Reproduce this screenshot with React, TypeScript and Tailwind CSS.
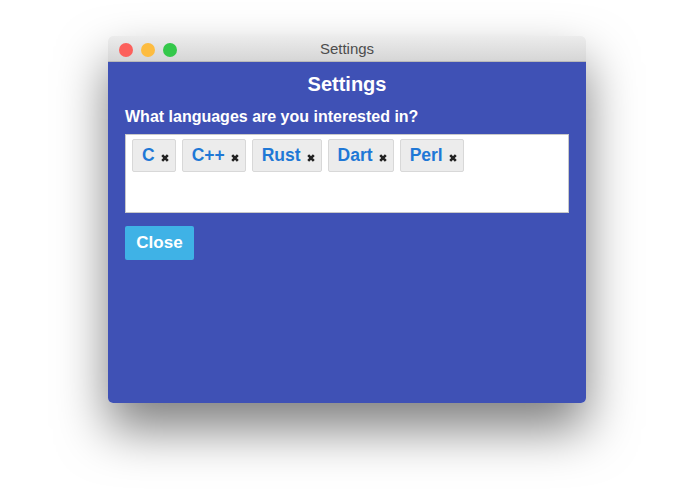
const languages = ['C', 'C++', 'Rust', 'Dart', 'Perl'];

function Chip({ label }: { label: string }) {
  return (
    <span className="flex h-[33px] items-center gap-[6px] rounded-[2px] border border-[#d8d8d8] bg-[#ececec] pl-[9px] pr-[6px]">
      <span className="text-[17.5px] font-bold leading-none text-[#1f78d6]">{label}</span>
      <svg width="8" height="8" viewBox="0 0 8 8" className="mt-[4px]">
        <path d="M1.2 1.2L6.8 6.8M6.8 1.2L1.2 6.8" stroke="#222" strokeWidth="2.6" strokeLinecap="butt" />
      </svg>
    </span>
  );
}

export default function App() {
  return (
    <div
      className="min-h-[494px] bg-white pt-[36px] pl-[108px]"
      style={{ fontFamily: '"Liberation Sans", Arial, sans-serif' }}
    >
      <div className="flex h-[367px] w-[478px] flex-col overflow-hidden rounded-[5px] shadow-[0_26px_50px_rgba(0,0,0,0.5)]">
        {/* title bar */}
        <div className="relative flex h-[26px] shrink-0 items-center justify-center border-b border-[#b9b9b9] bg-gradient-to-b from-[#ececec] to-[#d6d6d6] pt-[2px]">
          <div className="absolute left-[11px] top-[7px] flex gap-[8px]">
            <span className="h-[14px] w-[14px] rounded-full bg-[#fc605c]" />
            <span className="h-[14px] w-[14px] rounded-full bg-[#fdbc40]" />
            <span className="h-[14px] w-[14px] rounded-full bg-[#34c84a]" />
          </div>
          <span className="text-[15px] text-[#4d4d4d]">Settings</span>
        </div>

        {/* body */}
        <div className="flex flex-1 flex-col bg-[#3f51b5] px-[17px] text-white">
          <h1 className="mt-[10px] text-center text-[20px] font-bold leading-[24px]">Settings</h1>
          <p className="mt-[11px] text-[16px] font-bold leading-[19px]">
            What languages are you interested in?
          </p>
          <div className="mt-[8px] flex h-[79px] flex-wrap content-start gap-[6px] border border-[#c9c9c9] bg-white px-[6px] pt-[4px]">
            {languages.map((l) => (
              <Chip key={l} label={l} />
            ))}
          </div>
          <button className="mt-[13px] h-[34px] w-[69px] rounded-[2px] bg-[#3fb2e6] text-[17px] font-bold text-white">
            Close
          </button>
        </div>
      </div>
    </div>
  );
}
